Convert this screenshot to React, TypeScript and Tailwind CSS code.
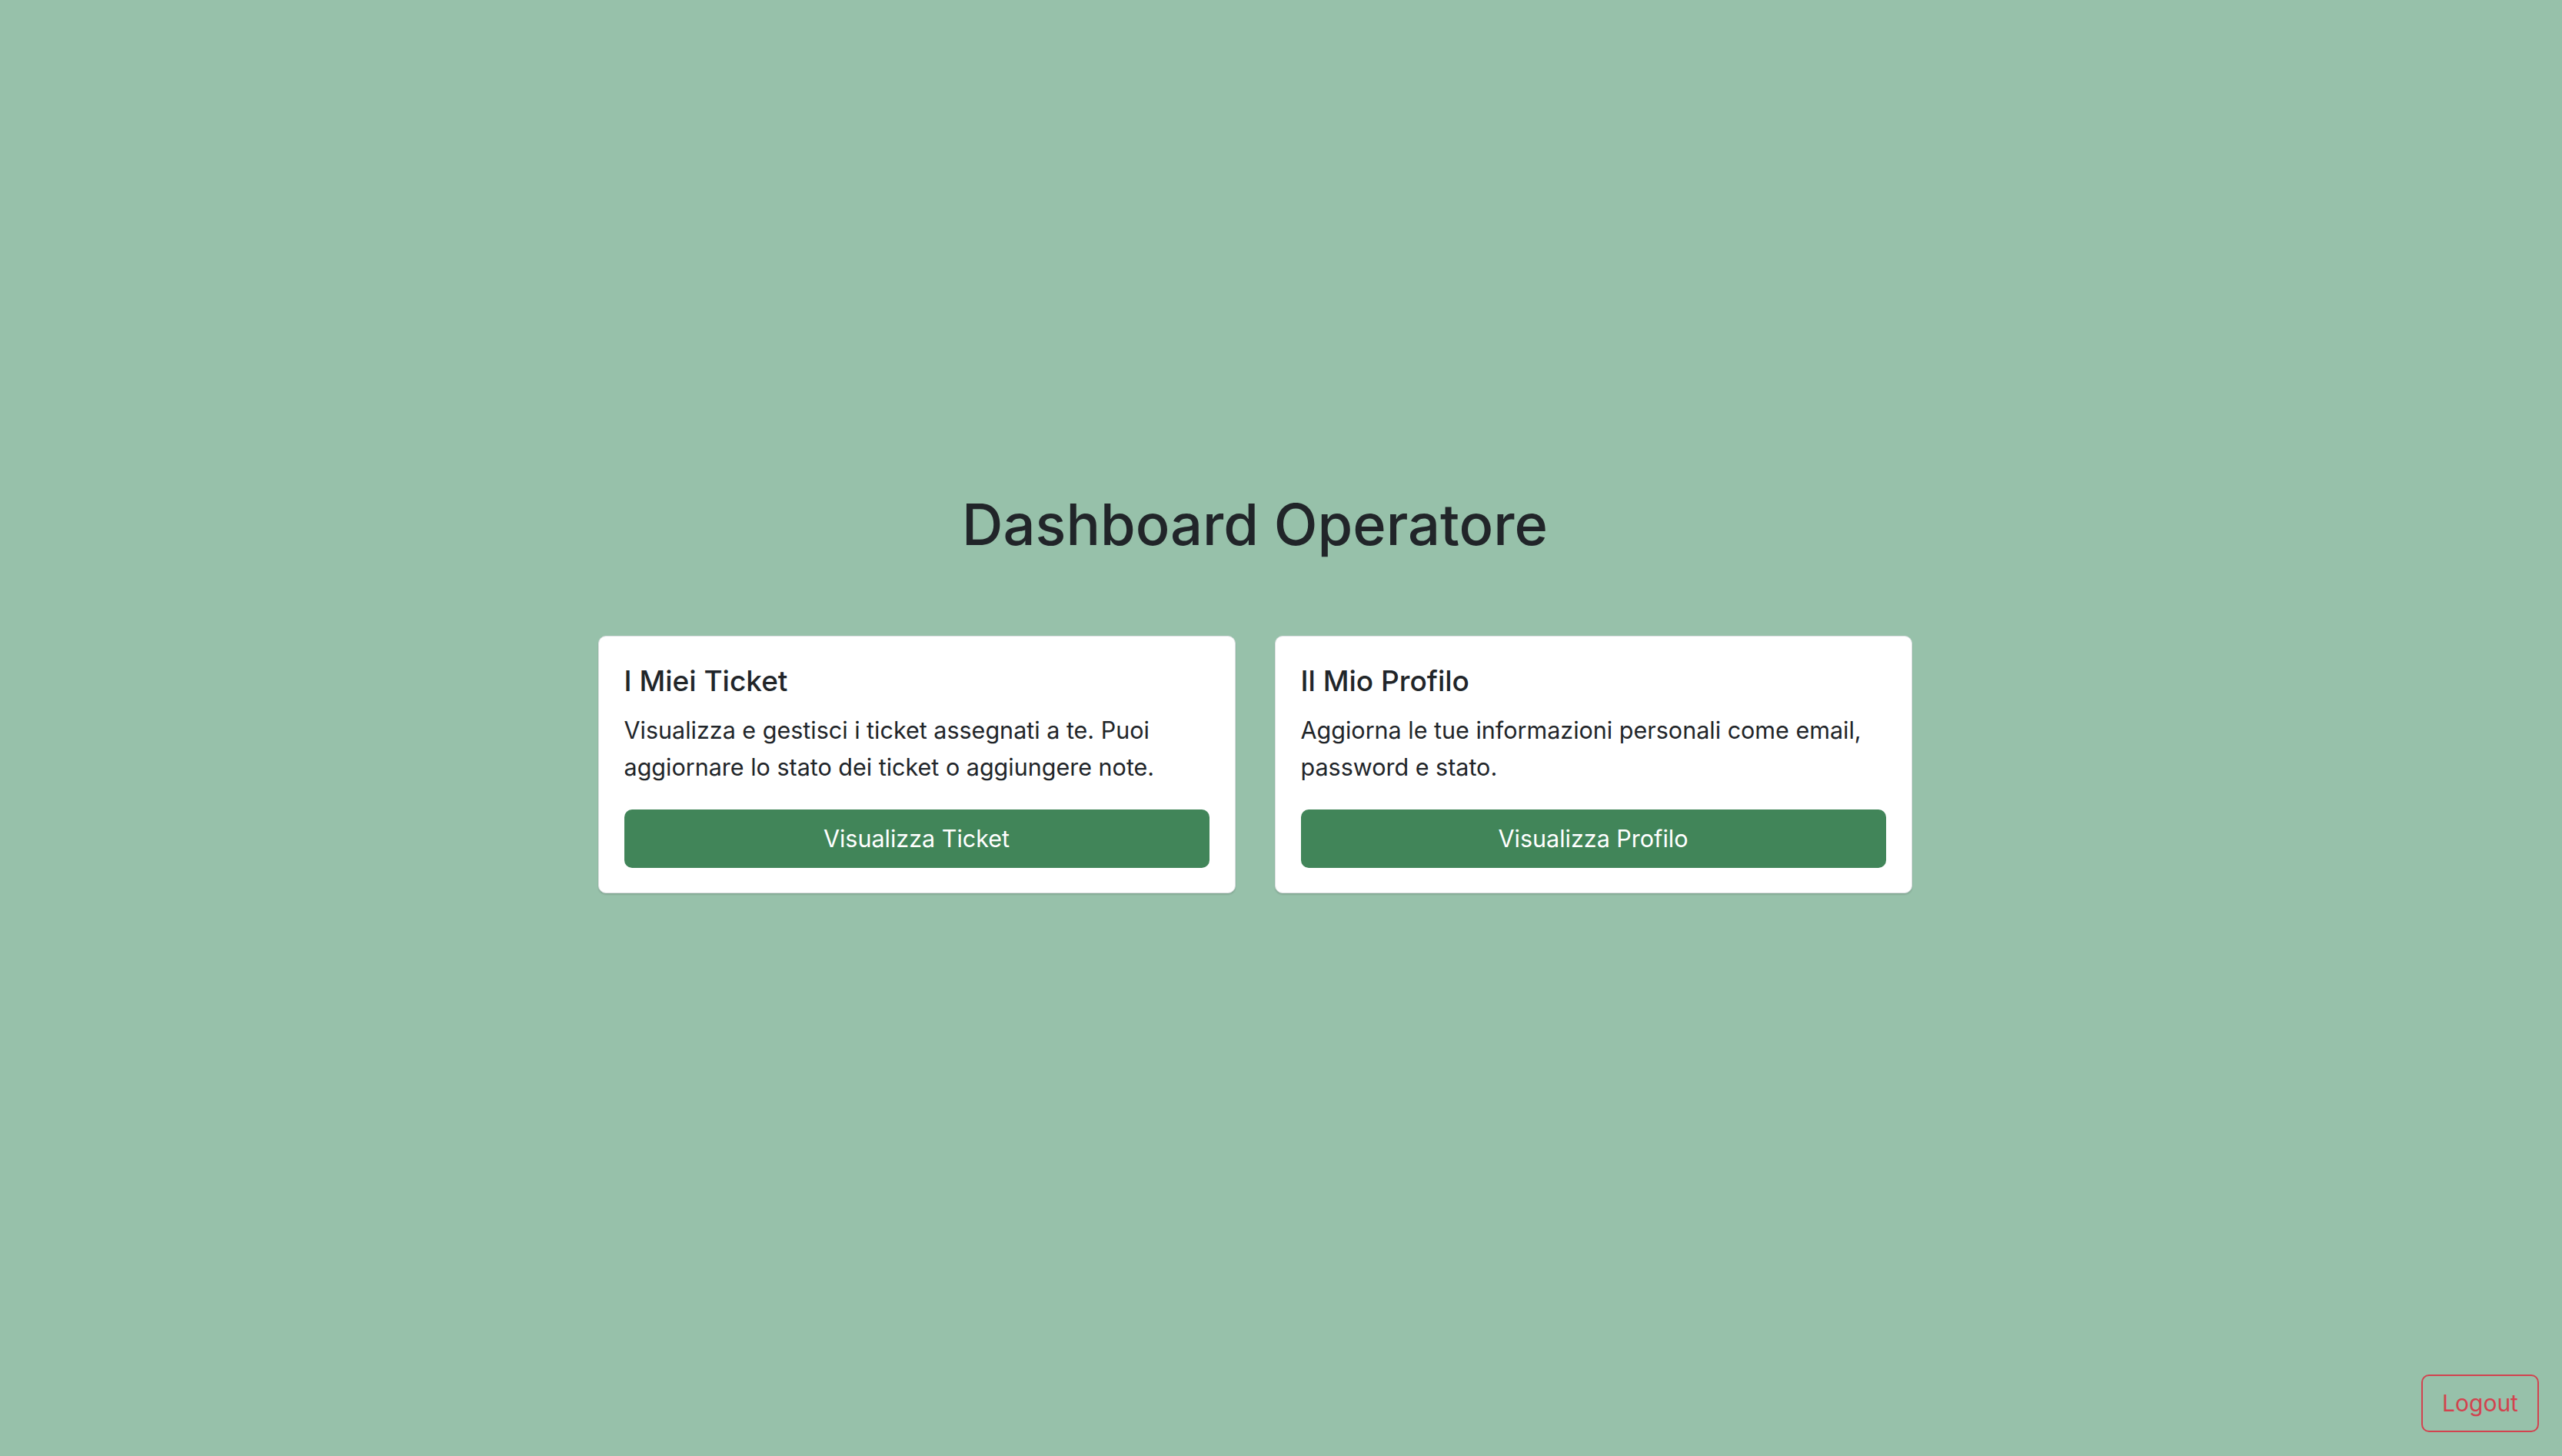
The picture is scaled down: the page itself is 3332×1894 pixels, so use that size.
import React from 'react';

const cards = [
  {
    title: 'I Miei Ticket',
    text: 'Visualizza e gestisci i ticket assegnati a te. Puoi aggiornare lo stato dei ticket o aggiungere note.',
    action: 'Visualizza Ticket',
  },
  {
    title: 'Il Mio Profilo',
    text: 'Aggiorna le tue informazioni personali come email, password e stato.',
    action: 'Visualizza Profilo',
  },
];

const DashboardCard = ({ title, text, action }: { title: string; text: string; action: string }) => (
  <div className="w-[829px] rounded-[10px] border border-[#dcdfe1] bg-white px-[33px] pt-[34px] pb-[32px] shadow-[0_2px_2px_rgba(0,0,0,0.12)]">
    <h5 className="text-[37px] font-medium leading-[48px] text-[#212529]">{title}</h5>
    <p className="mt-[16px] text-[30.5px] leading-[48px] text-[#212529]">{text}</p>
    <button className="mt-[31px] flex h-[76px] w-full items-center justify-center rounded-[10px] bg-[#418559] text-[30.5px] text-white">
      {action}
    </button>
  </div>
);

export default function App() {
  return (
    <div className="relative min-h-screen bg-[#97c1aa] font-['Inter','Noto_Sans',sans-serif] text-[#212529]">
      <div className="flex flex-col items-center pt-[634px] pr-[68px]">
        {/* Title */}
        <h1 className="text-[74px] font-medium leading-[96px]">Dashboard Operatore</h1>

        {/* Cards */}
        <div className="mt-[97px] flex gap-[51px]">
          {cards.map((c) => (
            <DashboardCard key={c.title} {...c} />
          ))}
        </div>
      </div>

      <button className="absolute right-[30px] bottom-[31px] flex h-[75px] w-[153px] items-center justify-center rounded-[10px] border-2 border-[#d2434f] text-[30px] text-[#d2434f]">
        Logout
      </button>
    </div>
  );
}
